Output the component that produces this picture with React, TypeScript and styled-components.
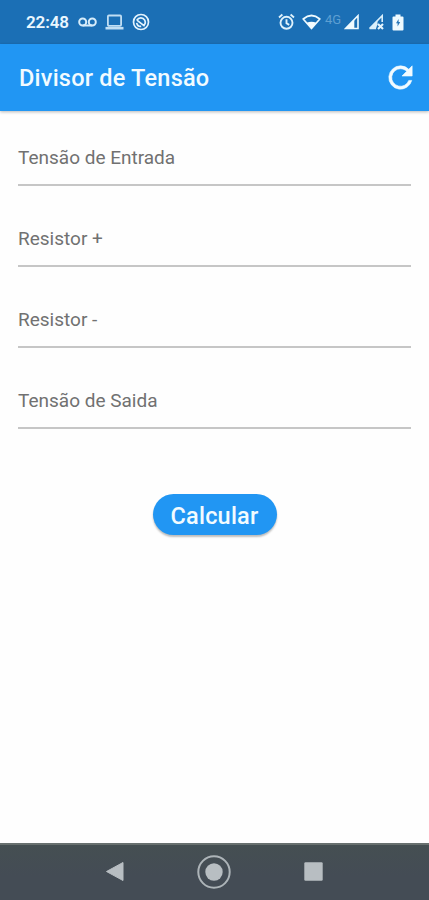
import React from "react";
import styled, { createGlobalStyle } from "styled-components";

const GlobalStyle = createGlobalStyle`
  * { box-sizing: border-box; }
  body { margin: 0; background: #fefefe; font-family: Roboto, sans-serif; }
`;

const Screen = styled.div`
  width: 429px;
  height: 900px;
  display: flex;
  flex-direction: column;
  overflow: hidden;
  background: #fefefe;
`;

const StatusBar = styled.header`
  height: 44px;
  flex: none;
  display: flex;
  align-items: center;
  justify-content: space-between;
  padding: 0 25px 0 26px;
  background: #1b6fb5;
  color: #eaf7ff;
`;

const StatusGroup = styled.div`
  display: flex;
  align-items: center;
`;

const Clock = styled.span`
  width: 52px;
  font-size: 17px;
  font-weight: 600;
  line-height: 20px;
  letter-spacing: -0.1px;
`;

const Network = styled.span`
  width: 19px;
  margin-left: 4px;
  padding-bottom: 5px;
  font-size: 13px;
  line-height: 14px;
  color: #5e9fd2;
`;

const Glyph = styled.svg<{ $w: number; $h: number; $gap?: number }>`
  display: block;
  flex: none;
  width: ${(p) => p.$w}px;
  height: ${(p) => p.$h}px;
  margin-left: ${(p) => p.$gap ?? 0}px;
`;

const AppBar = styled.div`
  height: 67px;
  flex: none;
  display: flex;
  align-items: center;
  justify-content: space-between;
  padding: 0 11px 0 19px;
  background: #2196f3;
  box-shadow: 0 1px 3px rgba(0, 0, 0, 0.28);
`;

const Title = styled.h1`
  margin: 1px 0 0;
  font-size: 23.5px;
  font-weight: 500;
  line-height: 30px;
  letter-spacing: 0.22px;
  color: #f2fbff;
`;

const IconButton = styled.button`
  display: flex;
  padding: 0;
  border: 0;
  background: none;
`;

const Form = styled.main`
  flex: 1;
  display: flex;
  flex-direction: column;
  align-items: center;
  padding: 0 18px;
`;

const Field = styled.label<{ $first?: boolean }>`
  width: 100%;
  height: ${(p) => (p.$first ? 75 : 81)}px;
  display: flex;
  flex-direction: column;
  justify-content: flex-end;
  border-bottom: 2px solid #c6c6c6;
`;

const Label = styled.span`
  height: 24px;
  margin-bottom: 15px;
  font-size: 19px;
  line-height: 25px;
  color: #717171;
`;

const Calculate = styled.button`
  width: 124px;
  height: 41px;
  margin-top: 65px;
  padding: 2px 0 0;
  border: 0;
  border-radius: 21px;
  background: #2196f3;
  box-shadow: 0 2px 2px rgba(0, 0, 0, 0.26);
  color: #f2fbff;
  font: 500 23.5px/30px Roboto, sans-serif;
  letter-spacing: 0.2px;
`;

const NavBar = styled.nav`
  height: 57px;
  flex: none;
  display: flex;
  align-items: center;
  justify-content: space-between;
  padding: 0 106px 2px 105px;
  border-top: 2px solid #68706f;
  background: linear-gradient(#454f52, #444c55 55%);
`;

const fields = ["Tensão de Entrada", "Resistor +", "Resistor -", "Tensão de Saida"];

export default function App() {
  return (
    <>
      <GlobalStyle />
      <Screen>
        <StatusBar>
          <StatusGroup>
            <Clock>22:48</Clock>
            <Glyph $w={19} $h={12} viewBox="0 0 19 12" fill="none" stroke="#d6ecfa" strokeWidth="2">
              <circle cx="4.7" cy="6" r="3.5" />
              <circle cx="14.3" cy="6" r="3.5" />
              <path d="M4.7 9.5h9.6" />
            </Glyph>
            <Glyph $w={19} $h={16} $gap={8} viewBox="0 0 19 16" fill="none" stroke="#c0def3" strokeWidth="1.8">
              <rect x="2.9" y="1.5" width="13.2" height="10.3" rx="1" />
              <path d="M.5 14.2h18" strokeWidth="2.6" />
            </Glyph>
            <Glyph $w={18} $h={18} $gap={8} viewBox="0 0 18 18" fill="none" stroke="#e3f3fd" strokeWidth="1.7">
              <circle cx="9" cy="9" r="7.5" />
              <path d="M4.8 7.3C6.8 4 11 4 12.7 7.2c1 2.1.3 4.3-1.1 5.3M4.9 7.1l7.7 6.1M4.7 9.8c.4 2.5 2.4 3.7 4.5 3.5" />
            </Glyph>
          </StatusGroup>
          <StatusGroup>
            <Glyph $w={17} $h={18} viewBox="0 0 17 18" fill="none" stroke="#dff2fc" strokeWidth="1.9">
              <circle cx="8.5" cy="9.8" r="6" />
              <path d="M1 4.4 4.4 1.6M12.6 1.6 16 4.4M8.5 6.2v4l2.7 1.7" />
            </Glyph>
            <Glyph $w={19} $h={16} $gap={7} viewBox="0 0 19 16">
              <path d="M1.2 5Q9.5-2 17.8 5L9.5 14.5Z" fill="none" stroke="#eefaff" strokeWidth="1.7" strokeLinejoin="round" />
              <path d="M4.6 8.8Q9.5 6.6 14.4 8.8L9.5 14.5Z" fill="#f4fcff" />
            </Glyph>
            <Network>4G</Network>
            <Glyph $w={15} $h={16} viewBox="0 0 15 16">
              <path d="M1.5 14.5 14 1.7v12.8Z" fill="none" stroke="#eefaff" strokeWidth="1.6" />
              <path d="M1.5 14.5 10.3 5.5v9Z" fill="#eefaff" />
            </Glyph>
            <Glyph $w={16} $h={16} $gap={9} viewBox="0 0 16 16">
              <path d="M1.5 14.5 14.2 1.7V8M1.5 14.5H8" fill="none" stroke="#d9effb" strokeWidth="1.6" />
              <path d="M1.5 14.5 9.5 6.3v4L8 14.5Z" fill="#d9effb" />
              <path d="m10 10 5 5m0-5-5 5" stroke="#e5f5fd" strokeWidth="2.1" />
            </Glyph>
            <Glyph $w={12} $h={17} $gap={8} viewBox="0 0 12 17">
              <path d="M3.5.5h5v2h2a1 1 0 0 1 1 1v12a1 1 0 0 1-1 1h-9a1 1 0 0 1-1-1v-12a1 1 0 0 1 1-1h2Z" fill="#eefaff" />
              <path d="M6.6 4.9 4 9.2h1.6v3.4L8.2 8H6.6Z" fill="#2877b9" />
            </Glyph>
          </StatusGroup>
        </StatusBar>
        <AppBar>
          <Title>Divisor de Tensão</Title>
          <IconButton aria-label="Recarregar">
            <Glyph $w={35} $h={35} viewBox="0 0 24 24" fill="#f2fbff" stroke="#f2fbff" strokeWidth=".4">
              <path d="M17.65 6.35A7.96 7.96 0 0 0 12 4a8 8 0 1 0 7.73 10h-2.08A6 6 0 1 1 12 6c1.66 0 3.14.69 4.22 1.78L13 11h7V4l-2.35 2.35Z" />
            </Glyph>
          </IconButton>
        </AppBar>
        <Form>
          {fields.map((name, i) => (
            <Field key={name} $first={i === 0}>
              <Label>{name}</Label>
            </Field>
          ))}
          <Calculate>Calcular</Calculate>
        </Form>
        <NavBar>
          <Glyph $w={19} $h={21} viewBox="0 0 19 21">
            <path d="M1.5 10.5 18 1.5v18Z" fill="#b8bec2" stroke="#b8bec2" strokeLinejoin="round" />
          </Glyph>
          <Glyph $w={34} $h={34} viewBox="0 0 34 34">
            <circle cx="17" cy="17" r="15.7" fill="none" stroke="#adb4b8" strokeWidth="2" />
            <circle cx="17" cy="17" r="8.7" fill="#b8bec2" />
          </Glyph>
          <Glyph $w={19} $h={19} viewBox="0 0 19 19">
            <rect x=".3" y=".3" width="18.4" height="18.4" rx="1.2" fill="#b8bec2" />
          </Glyph>
        </NavBar>
      </Screen>
    </>
  );
}
